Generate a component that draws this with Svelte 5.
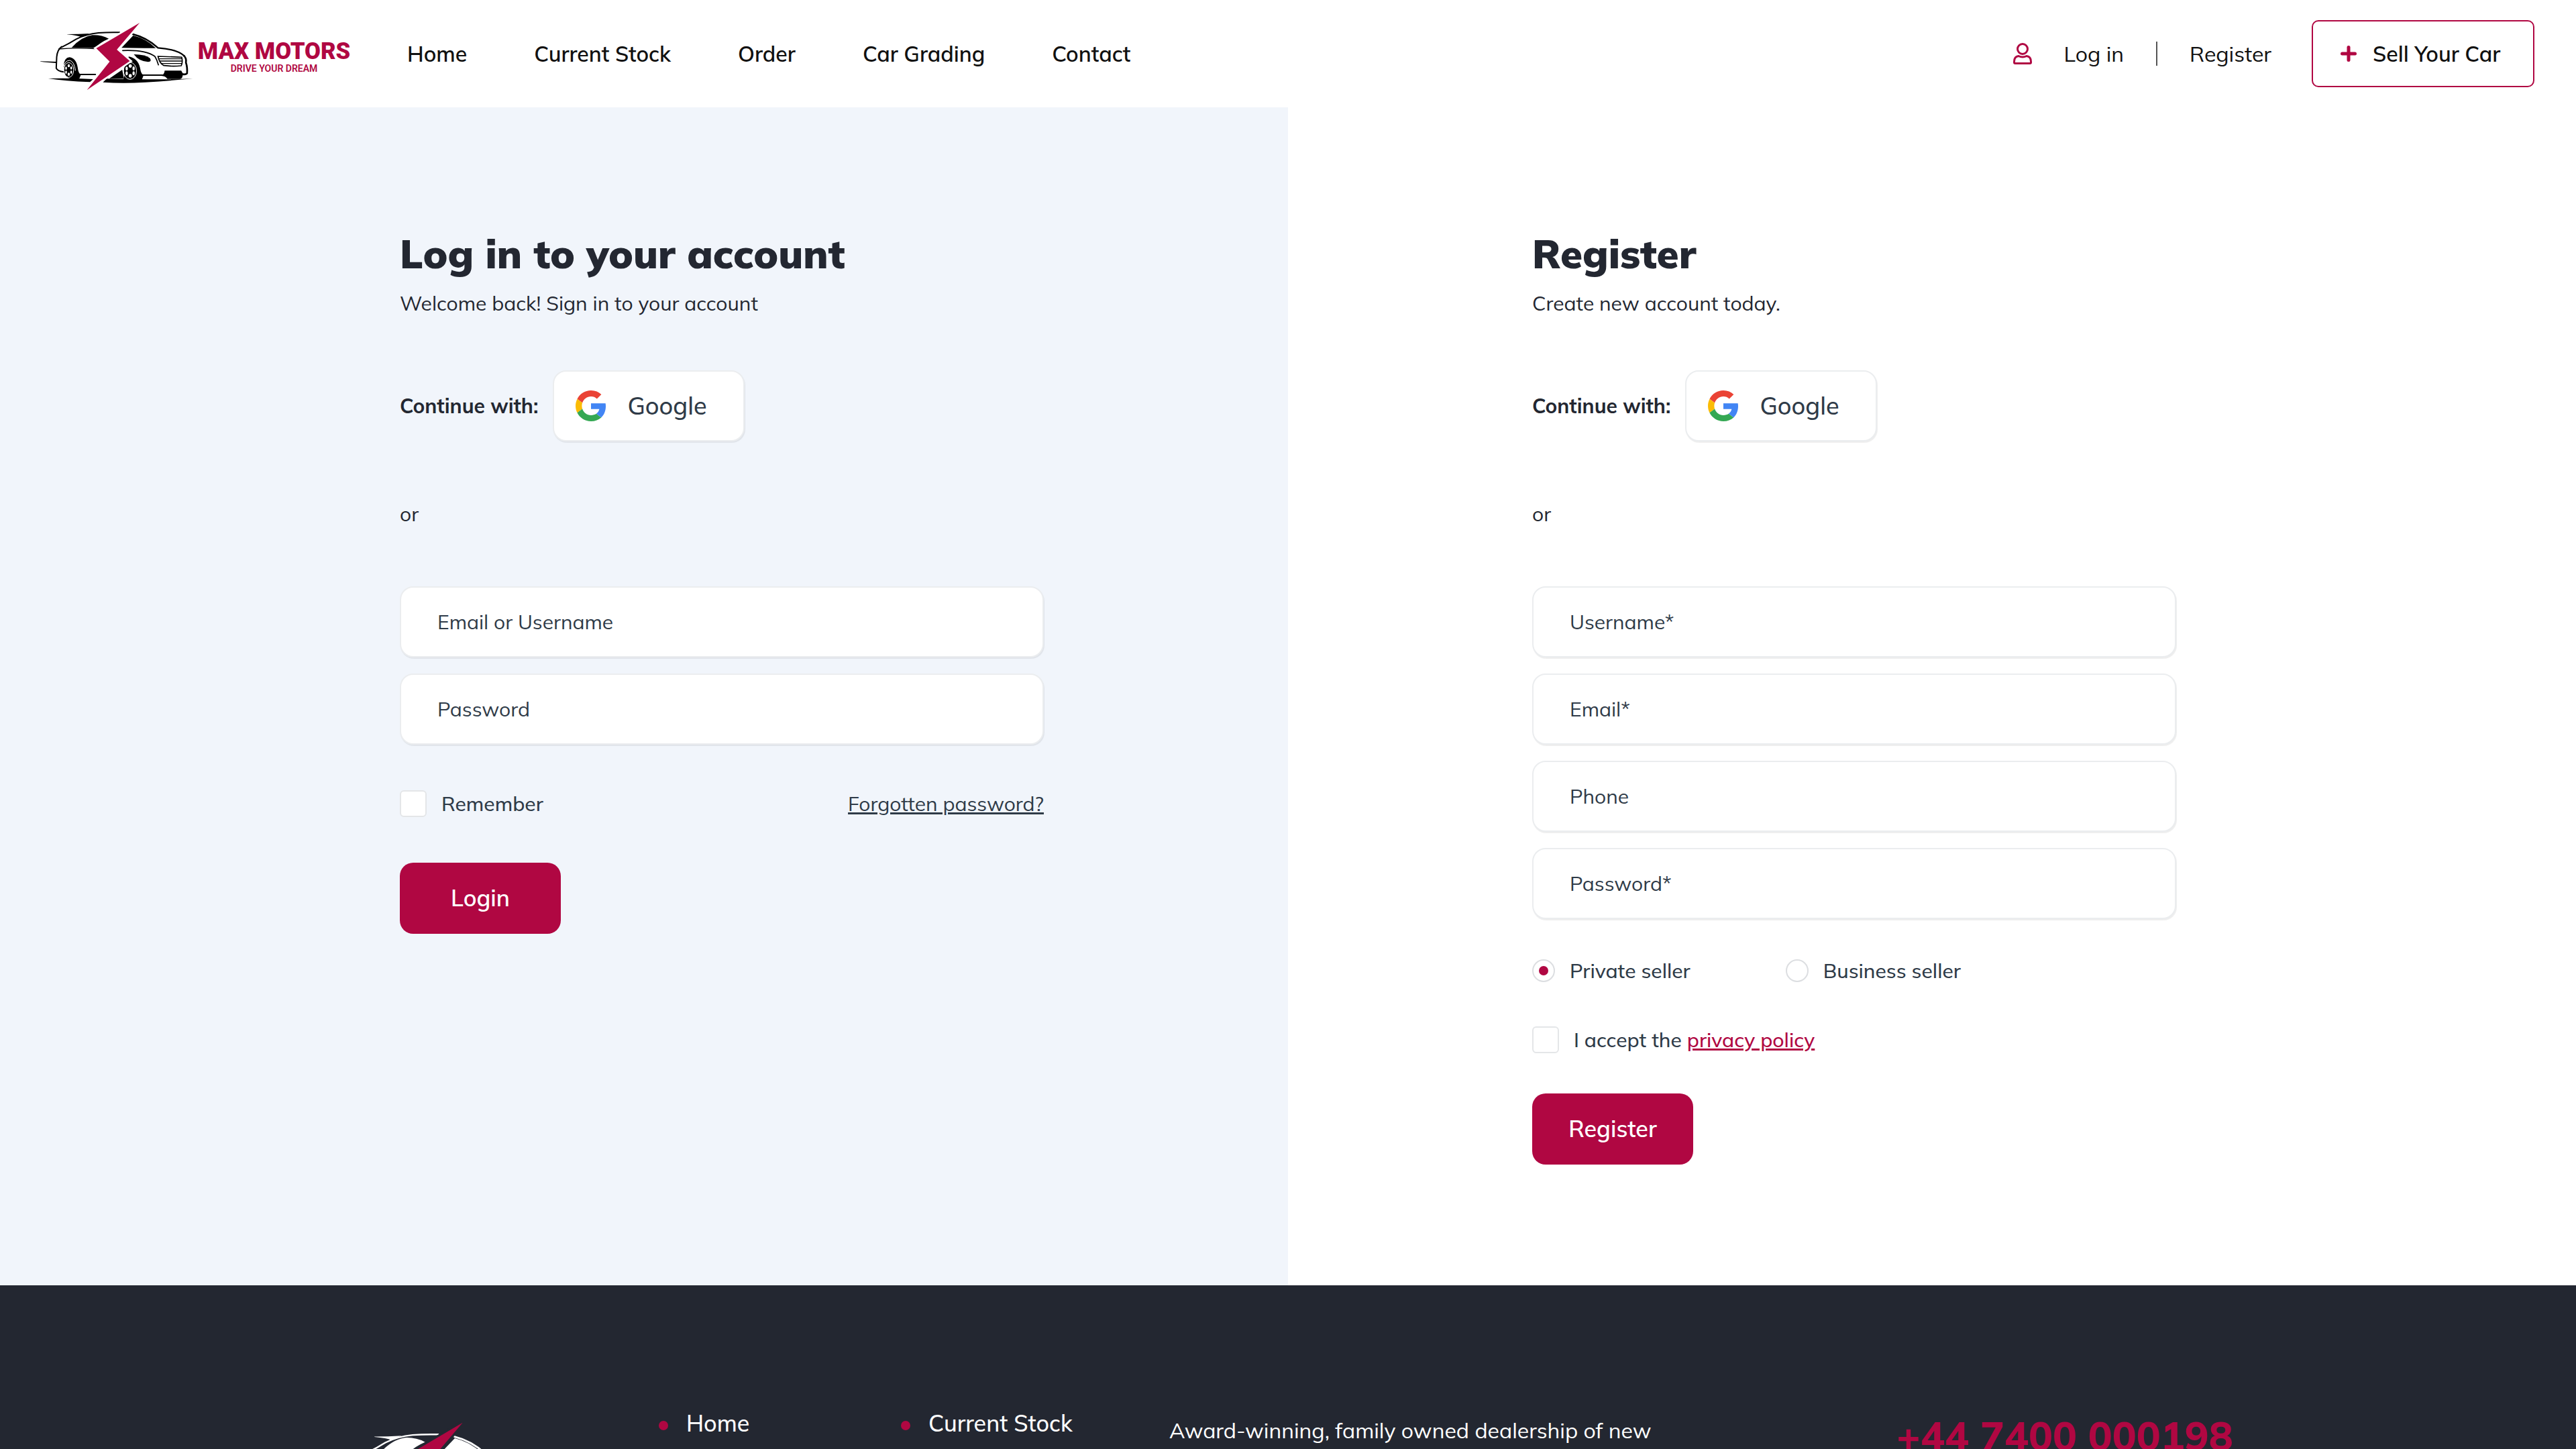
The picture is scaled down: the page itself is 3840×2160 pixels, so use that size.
<script lang="ts">
    const navLinks = ["Home", "Current Stock", "Order", "Car Grading", "Contact"];

    const registerFields = [
        { id: "reg-username", type: "text", label: "Username*" },
        { id: "reg-email", type: "email", label: "Email*" },
        { id: "reg-phone", type: "tel", label: "Phone" },
        { id: "reg-password", type: "password", label: "Password*" }
    ];

    let remember = $state(false);
    let accepted = $state(false);
    let sellerType = $state("private");

    function handleSubmit(event: Event) {
        event.preventDefault();
    }
</script>

<!-- Car with the lightning bolt, ink is the line colour and paper the background -->
{#snippet car(ink: string, paper: string)}
    <g fill={ink} stroke="none">
        <path d="M65 261Q160 258 266 264L252 277Q140 273 65 261Z" />
        <path d="M310 278L326 262Q500 268 712 262Q620 270 500 278Q400 284 310 278Z" />
        <path d="M30 184L102 186V192Q60 189 30 185Z" />
        <path d="M150 63Q200 63 250 60L212 76Q196 68 150 64Z" />
        <path d="M170 123Q214 74 262 67Q302 65 336 83Q300 98 272 125Q220 122 170 123Z" />
        <path d="M393 124L445 69Q502 82 546 125Q470 126 393 124Z" />
        <path d="M448 153Q500 154 520 170Q530 185 512 187Q470 184 448 153Z" />
        <path d="M586 226H660L668 240Q666 262 655 263H598Q590 250 571 249Q584 244 586 226Z" />
        <path d="M338 262L396 222L404 262Z" />
        <path d="M134 206Q136 168 160 166Q190 170 197 212Q200 240 212 243L204 262H165Q140 256 137 226Z" />
        <path d="M425 163Q466 170 476 214Q480 243 492 245L482 272H400Z" />
    </g>
    <g fill="none" stroke={ink} stroke-width="6" stroke-linecap="round">
        <path d="M125 121Q160 104 190 85Q235 62 290 57Q330 54 384 55" />
        <path d="M125 119Q106 132 103 165L101 215Q106 228 136 232" />
        <path d="M112 129Q190 123 276 128" stroke-width="4" />
        <path d="M204 243H276" />
        <path d="M444 63Q505 78 556 124Q640 130 674 160" stroke-width="7" />
        <path d="M398 136Q500 132 542 162Q552 178 558 200" stroke-width="5" />
        <path d="M556 162Q610 164 662 166Q668 186 660 204Q620 208 582 203Q562 192 556 162Z" stroke-width="5" />
        <path d="M560 173H662M563 183H663M570 194H661" stroke-width="4" />
        <path d="M672 160Q684 170 681 190Q688 210 686 238Q680 244 668 242" stroke-width="8" />
        <path d="M488 246H576" />
    </g>
    <path d="M134 208Q140 180 162 180Q182 186 187 226" fill="none" stroke={paper} stroke-width="3" />
    <g fill={ink} stroke={paper} stroke-width="3">
        <ellipse cx="157" cy="223" rx="22" ry="33" />
        <ellipse cx="431" cy="227" rx="29" ry="38" />
    </g>
    <g fill={paper}>
        <ellipse cx="157" cy="204" rx="5" ry="7" />
        <ellipse cx="157" cy="242" rx="5" ry="7" />
        <ellipse cx="145" cy="215" rx="4" ry="7" />
        <ellipse cx="145" cy="233" rx="4" ry="7" />
        <ellipse cx="168" cy="214" rx="4" ry="7" />
        <ellipse cx="168" cy="233" rx="4" ry="7" />
        <ellipse cx="432" cy="205" rx="7" ry="8" />
        <ellipse cx="432" cy="249" rx="7" ry="8" />
        <ellipse cx="416" cy="217" rx="5" ry="9" />
        <ellipse cx="416" cy="238" rx="5" ry="9" />
        <ellipse cx="447" cy="216" rx="5" ry="9" />
        <ellipse cx="447" cy="238" rx="5" ry="9" />
    </g>
    <path
        d="M474 12L372 132L430 183L238 313L340 185L280 126Z"
        fill="#b00742"
        stroke={paper}
        stroke-width="16"
        paint-order="stroke"
    />
{/snippet}

{#snippet google()}
    <div class="social">
        <span class="social-label">Continue with:</span>
        <button type="button" class="google-btn">
            <svg viewBox="0 0 48 48" aria-hidden="true">
                <path fill="#EA4335" d="M24 9.5c3.54 0 6.71 1.22 9.21 3.6l6.85-6.85C35.9 2.38 30.47 0 24 0 14.62 0 6.51 5.38 2.56 13.22l7.98 6.19C12.43 13.72 17.74 9.5 24 9.5z" />
                <path fill="#4285F4" d="M46.98 24.55c0-1.57-.15-3.09-.38-4.55H24v9.02h12.94c-.58 2.96-2.26 5.48-4.78 7.18l7.73 6c4.51-4.18 7.09-10.36 7.09-17.65z" />
                <path fill="#FBBC05" d="M10.53 28.59c-.48-1.45-.76-2.99-.76-4.59s.27-3.14.76-4.59l-7.98-6.19C.92 16.46 0 20.12 0 24c0 3.88.92 7.54 2.56 10.78l7.97-6.19z" />
                <path fill="#34A853" d="M24 48c6.48 0 11.93-2.13 15.89-5.81l-7.73-6c-2.15 1.45-4.92 2.3-8.16 2.3-6.26 0-11.57-4.22-13.47-9.91l-7.98 6.19C6.51 42.62 14.62 48 24 48z" />
            </svg>
            Google
        </button>
    </div>
    <p class="or">or</p>
{/snippet}

<header class="header">
    <a href="/" class="logo" aria-label="Max Motors">
        <svg viewBox="30 -15 1400 330" aria-hidden="true">
            {@render car("#000", "#fff")}
            <text x="1075" y="173" class="logo-name">MAX MOTORS</text>
            <text x="1075" y="231" class="logo-tagline">DRIVE YOUR DREAM</text>
        </svg>
    </a>
    <nav class="nav">
        {#each navLinks as link}
            <a href="/">{link}</a>
        {/each}
    </nav>
    <div class="account">
        <svg class="user-icon" viewBox="0 0 28 32" fill="none" stroke="#b00742" stroke-width="3" aria-hidden="true">
            <circle cx="14" cy="9" r="7.5" />
            <path d="M8 19.5C4 20 1.5 23 1.5 28V29Q1.5 30.5 3 30.5H25Q26.5 30.5 26.5 29V28C26.5 23 24 20 20 19.5Q14 22.5 8 19.5Z" />
        </svg>
        <a href="/login">Log in</a>
        <span class="divider"></span>
        <a href="/register">Register</a>
    </div>
    <a href="/sell" class="sell-btn">
        <svg viewBox="0 0 24 24" stroke="#b00742" stroke-width="5" stroke-linecap="round" aria-hidden="true">
            <path d="M12 2.5V21.5M2.5 12H21.5" />
        </svg>
        Sell Your Car
    </a>
</header>

<main class="panels">
    <section class="panel login">
        <form class="form" onsubmit={handleSubmit}>
            <h1>Log in to your account</h1>
            <p class="intro">Welcome back! Sign in to your account</p>
            {@render google()}
            <div class="fields">
                <input type="text" aria-label="Email or Username" placeholder="Email or Username" />
                <input type="password" aria-label="Password" placeholder="Password" />
            </div>
            <div class="remember-row">
                <label class="check">
                    <input type="checkbox" bind:checked={remember} />
                    Remember
                </label>
                <a href="/forgot">Forgotten password?</a>
            </div>
            <button type="submit" class="submit-btn">Login</button>
        </form>
    </section>

    <section class="panel register">
        <form class="form" onsubmit={handleSubmit}>
            <h1>Register</h1>
            <p class="intro">Create new account today.</p>
            {@render google()}
            <div class="fields">
                {#each registerFields as field}
                    <input id={field.id} type={field.type} aria-label={field.label} placeholder={field.label} />
                {/each}
            </div>
            <div class="radio-row">
                <label class="radio">
                    <input type="radio" name="seller" value="private" bind:group={sellerType} />
                    Private seller
                </label>
                <label class="radio">
                    <input type="radio" name="seller" value="business" bind:group={sellerType} />
                    Business seller
                </label>
            </div>
            <div class="accept-row">
                <label class="check">
                    <input type="checkbox" bind:checked={accepted} />
                    <span>I accept the <a href="/privacy">privacy policy</a></span>
                </label>
            </div>
            <button type="submit" class="submit-btn">Register</button>
        </form>
    </section>
</main>

<footer class="footer">
    <a href="/" class="footer-logo" aria-label="Max Motors">
        <svg viewBox="30 0 690 330" aria-hidden="true">
            {@render car("#fff", "#232731")}
        </svg>
    </a>
    <a href="/" class="footer-link">Home</a>
    <a href="/stock" class="footer-link">Current Stock</a>
    <p class="footer-text">Award-winning, family owned dealership of new</p>
    <a href="tel:+447400000198" class="phone">+44 7400 000198</a>
</footer>

<style>
    :global(body) {
        background: white;
        font-family: "Mulish", "Open Sans", "Noto Sans", sans-serif;
        font-size: 30px;
        line-height: 40px;
        color: #232731;
    }

    :global(*) {
        box-sizing: border-box;
    }

    a {
        color: inherit;
        text-decoration: none;
    }

    h1,
    p {
        margin: 0;
    }

    .header {
        display: flex;
        align-items: center;
        height: 160px;
        padding: 0 62px 0 60px;
        background: white;
        color: #111;
        font-size: 32px;
        font-weight: 600;
        white-space: nowrap;
    }

    .logo {
        margin-right: 80px;
    }

    .logo svg {
        display: block;
        width: 467px;
        height: 110px;
    }

    .logo text {
        fill: #b00742;
        text-anchor: middle;
    }

    .logo-name {
        font-family: "Roboto", sans-serif;
        font-size: 104px;
        font-weight: 900;
    }

    .logo-tagline {
        font-family: "Roboto", sans-serif;
        font-size: 42px;
        font-weight: 600;
    }

    .nav {
        display: flex;
        gap: 100px;
    }

    .account {
        display: flex;
        align-items: center;
        gap: 48px;
        margin-left: auto;
        font-weight: 400;
    }

    .user-icon {
        width: 28px;
        height: 32px;
    }

    .divider {
        width: 2px;
        height: 36px;
        background: #555;
    }

    .sell-btn {
        display: flex;
        align-items: center;
        gap: 24px;
        width: 332px;
        height: 100px;
        margin-left: 60px;
        padding-left: 41px;
        border: 2px solid #b00742;
        border-radius: 10px;
    }

    .sell-btn svg {
        width: 24px;
        height: 24px;
    }

    .panels {
        display: grid;
        grid-template-columns: 1fr 1fr;
    }

    .panel {
        display: flex;
        padding: 182px 364px 180px;
    }

    .login {
        justify-content: flex-end;
        background: #f1f5fb;
    }

    .form {
        width: 100%;
        max-width: 960px;
    }

    h1 {
        margin-bottom: 18px;
        font-size: 60px;
        line-height: 72px;
        font-weight: 900;
    }

    .social {
        display: flex;
        align-items: center;
        gap: 22px;
        margin: 80px 0 88px;
    }

    .social-label {
        font-weight: 700;
    }

    .google-btn {
        display: flex;
        align-items: center;
        gap: 31px;
        width: 286px;
        height: 106px;
        padding: 0 32px;
        background: white;
        border: 2px solid #ebedef;
        border-radius: 20px;
        box-shadow: 1px 2px 1px rgba(0, 0, 0, 0.07);
        font: inherit;
        font-size: 36px;
        font-weight: 500;
        color: #2f3b48;
        cursor: pointer;
    }

    .google-btn svg {
        width: 46px;
        height: 46px;
    }

    .fields {
        display: grid;
        gap: 24px;
        margin-top: 88px;
    }

    .fields input {
        width: 100%;
        height: 106px;
        padding: 0 54px;
        background: white;
        border: 2px solid #ebedef;
        border-radius: 20px;
        box-shadow: 1px 2px 1px rgba(0, 0, 0, 0.07);
        font: inherit;
        color: #2f3b48;
    }

    .fields input::placeholder {
        color: #2f3b48;
        opacity: 1;
    }

    .remember-row {
        display: flex;
        align-items: center;
        justify-content: space-between;
        margin: 68px 0;
        color: #2f3b48;
    }

    .remember-row a {
        text-decoration: underline;
    }

    .check,
    .radio {
        display: flex;
        align-items: center;
        gap: 22px;
        color: #2f3b48;
        font-weight: 500;
    }

    .check input,
    .radio input {
        appearance: none;
        width: 40px;
        height: 40px;
        margin: 0;
        background: white;
        border: 2px solid #e4e6e8;
        border-radius: 6px;
    }

    .radio input {
        display: grid;
        place-items: center;
        width: 34px;
        height: 34px;
        border-color: #dcdee1;
        border-radius: 50%;
    }

    .radio input:checked::before {
        content: "";
        width: 14px;
        height: 14px;
        border-radius: 50%;
        background: #b00742;
    }

    .check input:checked {
        background: #b00742;
    }

    .radio-row {
        display: flex;
        gap: 142px;
        margin: 57px 0 63px;
    }

    .accept-row {
        margin-bottom: 60px;
    }

    .accept-row a {
        color: #b00742;
        text-decoration: underline;
    }

    .submit-btn {
        display: block;
        width: 240px;
        height: 106px;
        background: #b00742;
        border: none;
        border-radius: 20px;
        font: inherit;
        font-size: 34px;
        font-weight: 600;
        color: white;
        cursor: pointer;
    }

    .footer {
        display: grid;
        grid-template-columns: 473fr 361fr 400fr 1084fr 504fr;
        align-items: start;
        padding: 180px 509px 0;
        background: #232731;
        color: white;
        line-height: 48px;
        white-space: nowrap;
    }

    .footer-logo {
        margin-top: 20px;
    }

    .footer-logo svg {
        display: block;
        width: 281px;
        height: 134px;
    }

    .footer-link {
        display: flex;
        align-items: center;
        gap: 27px;
        margin-top: 2px;
        font-size: 34px;
        font-weight: 500;
    }

    .footer-link::before {
        content: "";
        width: 14px;
        height: 14px;
        margin-top: 6px;
        border-radius: 50%;
        background: #b00742;
    }

    .footer-text {
        margin-top: 12px;
        font-size: 32px;
    }

    .phone {
        margin-top: 8px;
        font-size: 60px;
        font-weight: 800;
        line-height: 72px;
        color: #b00742;
    }
</style>
